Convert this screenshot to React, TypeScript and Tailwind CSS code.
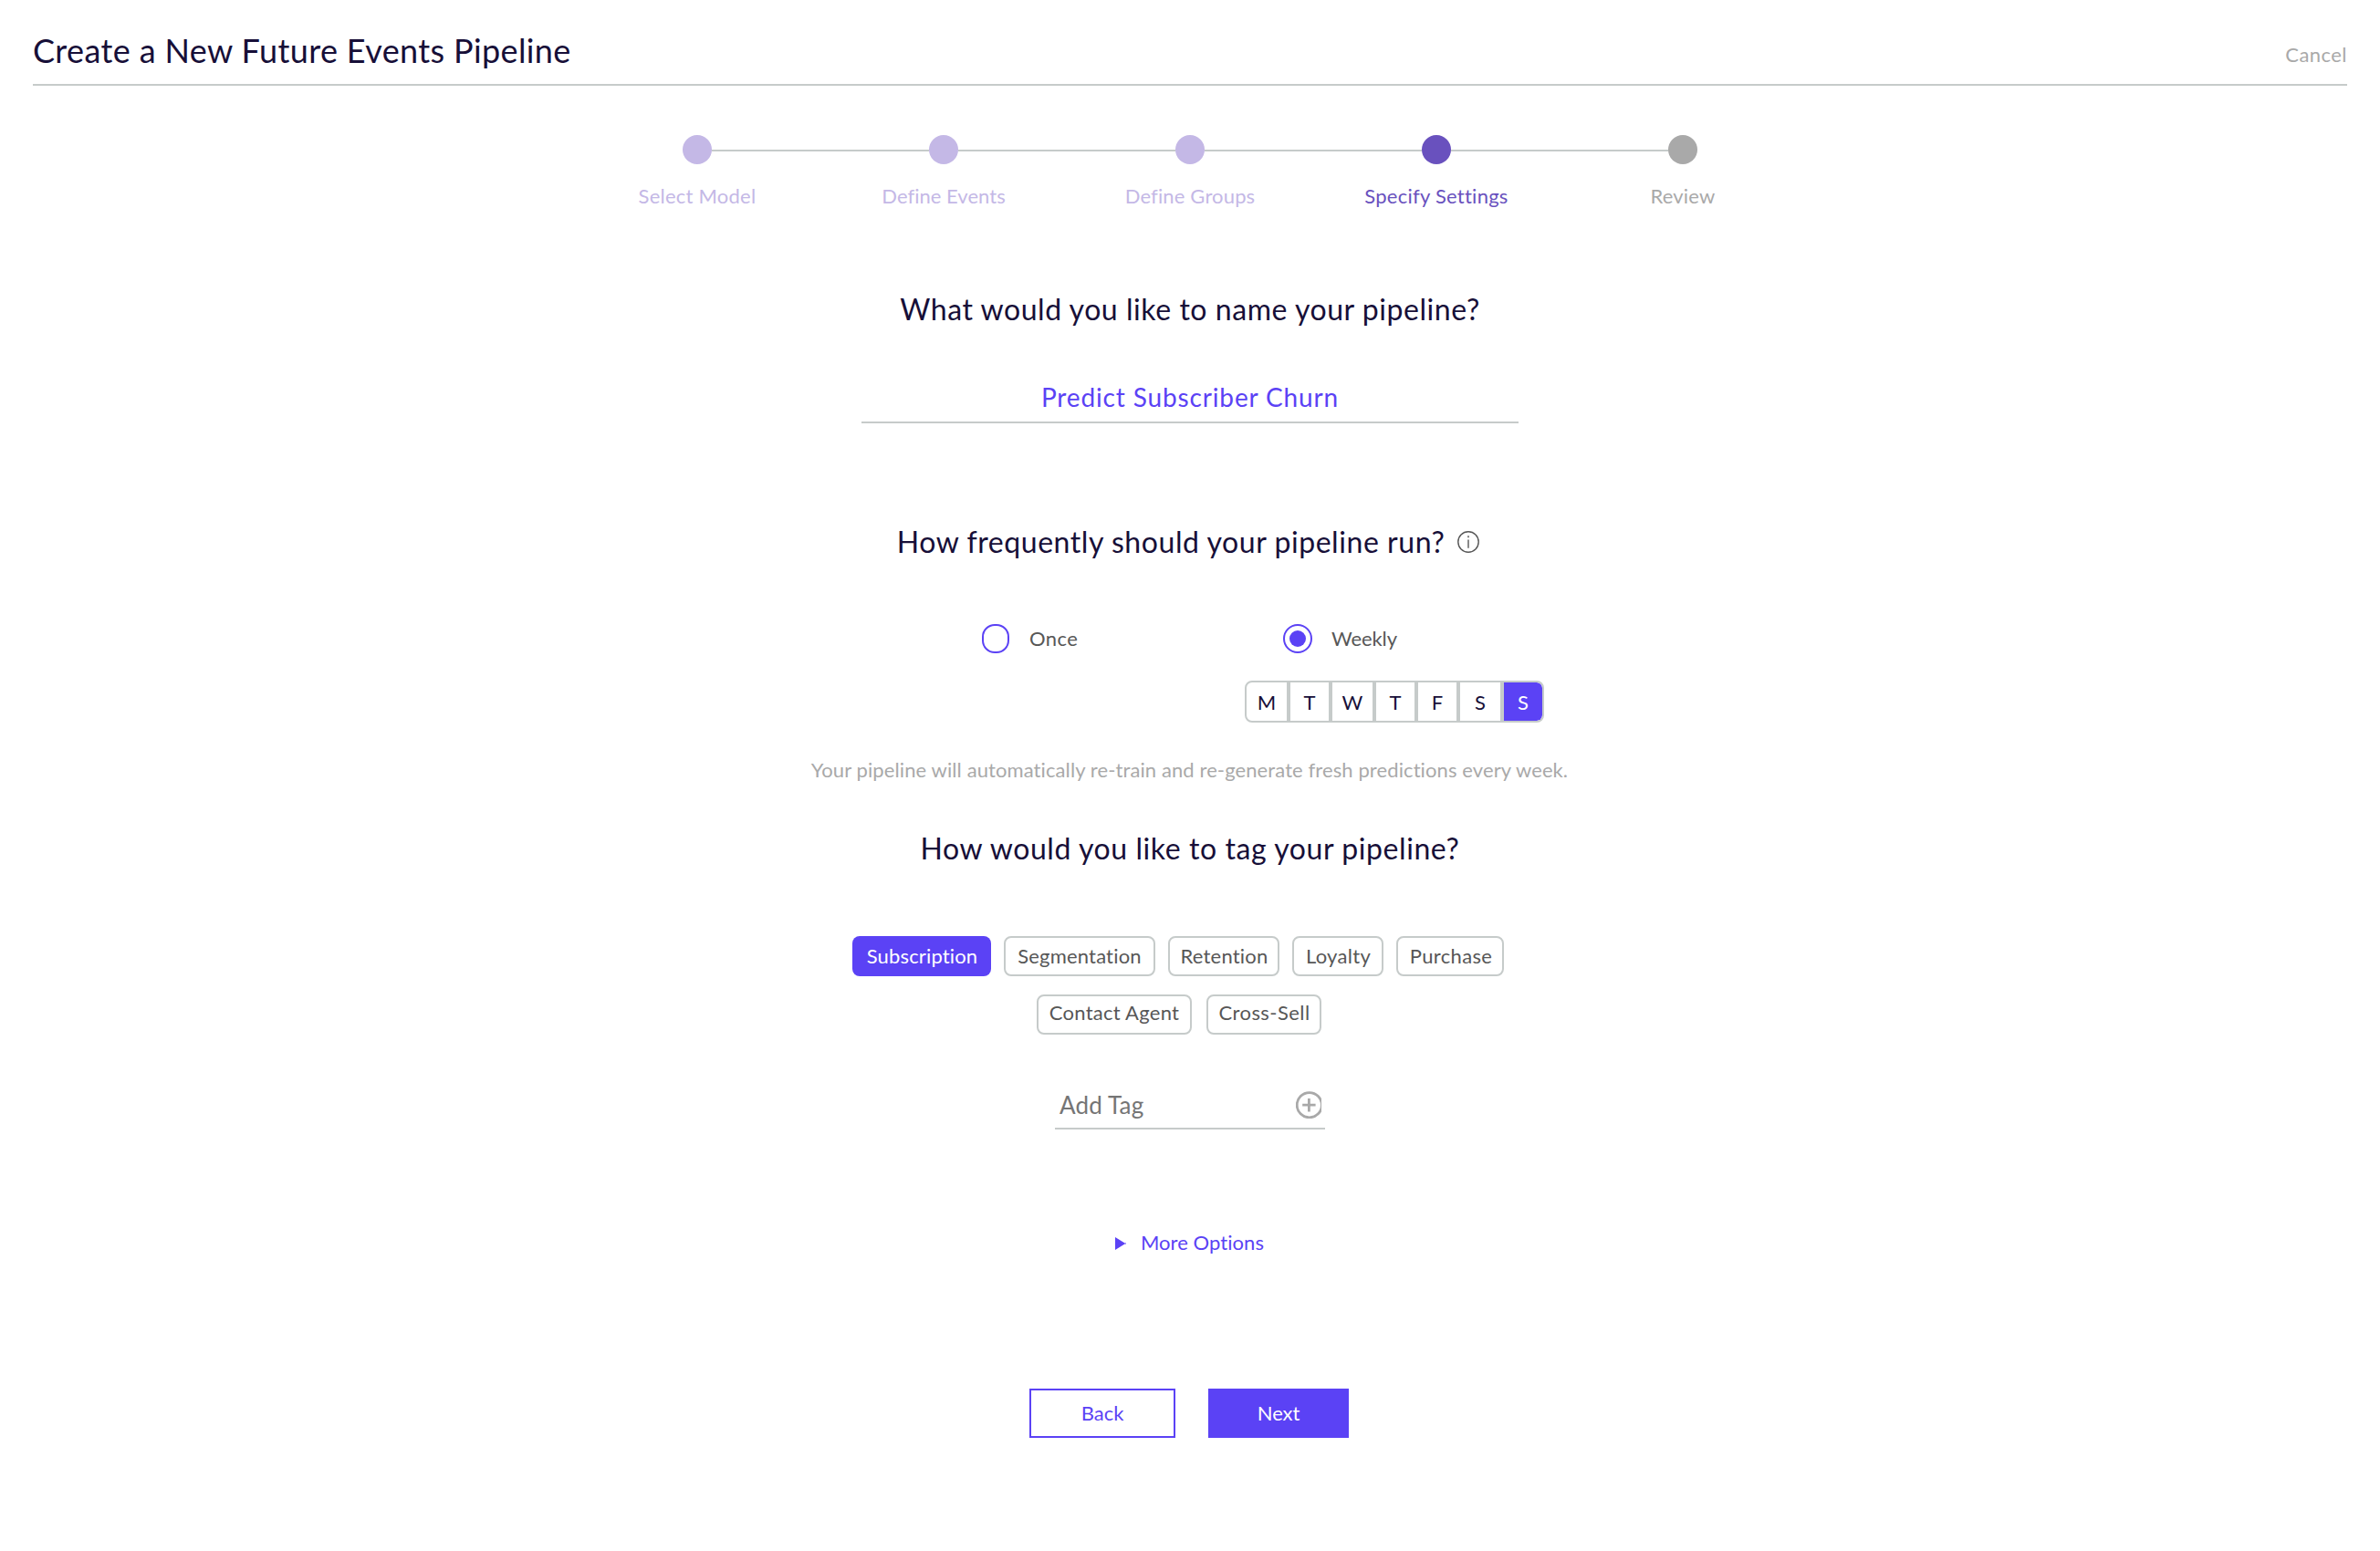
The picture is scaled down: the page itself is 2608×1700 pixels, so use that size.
import React from 'react';

const steps = [
  { label: 'Select Model', dot: 'bg-[#c4b8e6]', text: 'text-[#c4b8e6] tracking-[0.235px]' },
  { label: 'Define Events', dot: 'bg-[#c4b8e6]', text: 'text-[#c4b8e6] tracking-[0.036px]' },
  { label: 'Define Groups', dot: 'bg-[#c4b8e6]', text: 'text-[#c4b8e6] tracking-[0.15px]' },
  { label: 'Specify Settings', dot: 'bg-[#6951be]', text: 'text-[#6951be] tracking-[0.253px]' },
  { label: 'Review', dot: 'bg-[#a9a9a9]', text: 'text-[#a9a9a9] tracking-[0.184px]' },
];

const days = [
  { label: 'M', width: 'w-[48px]' },
  { label: 'T', width: 'w-[46px]' },
  { label: 'W', width: 'w-[48px]' },
  { label: 'T', width: 'w-[46px]' },
  { label: 'F', width: 'w-[46px]' },
  { label: 'S', width: 'w-[48px]' },
];

const firstTags = [
  { label: 'Segmentation', style: 'w-[166px] tracking-[0.185px]' },
  { label: 'Retention', style: 'w-[122px] tracking-[0.225px] pl-px' },
  { label: 'Loyalty', style: 'w-[100px] tracking-[0.292px] pl-px' },
  { label: 'Purchase', style: 'w-[118px] tracking-[0.35px] pl-0.5' },
];

const secondTags = [
  { label: 'Contact Agent', style: 'w-[170px] tracking-[0.266px]' },
  { label: 'Cross-Sell', style: 'w-[126px] tracking-[0.438px] pl-px' },
];

function Stepper() {
  return (
    <ol className="mx-auto mt-[54px] grid w-[1350px] grid-cols-5">
      {steps.map((step, i) => (
        <li key={step.label} className="flex flex-col items-center">
          <div className="flex h-8 w-full items-center">
            <span className={`mt-0.5 h-0.5 flex-1 ${i > 0 ? 'bg-[#c6cbca]' : ''}`} />
            <span className={`size-8 rounded-full ${step.dot}`} />
            <span className={`mt-0.5 h-0.5 flex-1 ${i < steps.length - 1 ? 'bg-[#c6cbca]' : ''}`} />
          </div>
          <span className={`mt-[19px] leading-[32px] ${step.text}`}>{step.label}</span>
        </li>
      ))}
    </ol>
  );
}

function InfoIcon() {
  return (
    <svg className="mb-px ml-[14px] size-6" viewBox="0 0 24 24" fill="none" stroke="#575757">
      <circle cx="12" cy="12" r="11.2" strokeWidth="1.4" />
      <path d="M12 9.4V18.8" strokeWidth="1.4" />
      <path d="M12 5.2V7.2" strokeWidth="1.5" />
    </svg>
  );
}

function PlusIcon() {
  return (
    <svg className="h-[30px] w-7 overflow-hidden" viewBox="0 0 28 30" fill="none" stroke="#a9a9a9" strokeWidth="2.8">
      <circle cx="14.8" cy="15.2" r="13.6" />
      <path d="M14.4 8V22.4M7.2 15.2H21.6" />
    </svg>
  );
}

export default function App() {
  return (
    <div className="h-[1700px] w-[2608px] overflow-hidden bg-white font-['Lato','Liberation_Sans',sans-serif] text-[22px] text-[#575757]">
      <header className="mr-9 ml-9 flex h-[94px] items-start justify-between border-b-2 border-[#c6cbca]">
        <h1 className="mt-[35px] text-[36px] leading-[40px] tracking-[0.38px] text-[#170f38]">
          Create a New Future Events Pipeline
        </h1>
        <button className="mt-[44px] leading-[32px] tracking-[0.45px] text-[#a9a9a9]">Cancel</button>
      </header>

      <Stepper />

      <main className="mx-auto flex w-[1350px] flex-col items-center">
        <h2 className="mt-[88px] text-[32px] leading-[40px] tracking-[0.55px] text-[#170f38]">
          What would you like to name your pipeline?
        </h2>
        <div className="mt-[56px] flex h-[49px] w-[720px] justify-center border-b-2 border-[#c6cbca] text-[28px] leading-[40px] tracking-[0.86px] text-[#5b42f5]">
          Predict Subscriber Churn
        </div>

        <div className="mt-[110px] flex h-10 items-center pr-1">
          <h2 className="text-[32px] leading-[40px] tracking-[0.56px] text-[#170f38]">
            How frequently should your pipeline run?
          </h2>
          <InfoIcon />
        </div>

        <div className="mt-[70px] flex w-full pl-[447px]">
          <div className="flex h-8 w-[288px] items-center">
            <span className="h-8 w-[30px] rounded-[14px] border-2 border-[#5b42f5]" />
            <span className="ml-[22px] leading-[32px] tracking-[0.4px]">Once</span>
          </div>
          <div>
            <div className="flex h-8 items-center pl-[42px]">
              <span className="flex size-8 items-center justify-center rounded-full border-2 border-[#5b42f5]">
                <span className="size-[18px] rounded-full bg-[#5b42f5]" />
              </span>
              <span className="ml-[21px] leading-[32px] tracking-[-0.1px]">Weekly</span>
            </div>
            <div className="mt-[30px] flex h-[46px] w-[328px] overflow-hidden rounded-lg border-2 border-[#c6cbca] text-[#170f38]">
              {days.map((day, i) => (
                <span
                  key={i}
                  className={`flex items-center justify-center border-r-4 border-[#c6cbca] pt-px ${day.width}`}
                >
                  {day.label}
                </span>
              ))}
              <span className="flex flex-1 items-center justify-center rounded-r-md bg-[#5b42f5] pt-px text-white">S</span>
            </div>
          </div>
        </div>

        <p className="mt-[36px] pr-px leading-[32px] tracking-[0.1px] text-[#a9a9a9]">
          Your pipeline will automatically re-train and re-generate fresh predictions every week.
        </p>

        <h2 className="mt-[50px] text-[32px] leading-[40px] tracking-[0.575px] text-[#170f38]">
          How would you like to tag your pipeline?
        </h2>

        <div className="mt-[76px] flex h-11 w-[740px] gap-[14px]">
          <button className="w-[152px] rounded-lg bg-[#5b42f5] pl-px leading-[44px] tracking-[0.152px] text-white">
            Subscription
          </button>
          {firstTags.map((tag) => (
            <button key={tag.label} className={`rounded-lg border-2 border-[#c6cbca] leading-[40px] ${tag.style}`}>
              {tag.label}
            </button>
          ))}
        </div>
        <div className="mt-5 mr-[24px] flex h-11 gap-4">
          {secondTags.map((tag) => (
            <button key={tag.label} className={`rounded-lg border-2 border-[#c6cbca] pb-1 leading-[36px] ${tag.style}`}>
              {tag.label}
            </button>
          ))}
        </div>

        <div className="mt-[56px] flex h-[48px] w-[296px] justify-between border-b-2 border-[#c6cbca] pr-1 pl-[5px]">
          <span className="mt-px text-[26px] leading-[40px] tracking-[0.183px] text-[#757575]">Add Tag</span>
          <span className="mt-1.5">
            <PlusIcon />
          </span>
        </div>

        <button className="mt-[108px] flex h-8 items-center pr-px text-[#5b42f5]">
          <svg className="mt-0.5 h-[14px] w-3" viewBox="0 0 12 14" fill="currentColor">
            <path d="M0 0L10.5 6.5H12V7.5H10.5L0 14Z" />
          </svg>
          <span className="ml-4 leading-[32px] tracking-[0.06px]">More Options</span>
        </button>

        <div className="mt-[144px] flex h-[54px] gap-9 pr-0.5">
          <button className="w-[160px] border-2 border-[#5b42f5] pb-0.5 text-[#5b42f5]">Back</button>
          <button className="w-[154px] bg-[#5b42f5] pb-0.5 tracking-[-0.1px] text-white">Next</button>
        </div>
      </main>
    </div>
  );
}
